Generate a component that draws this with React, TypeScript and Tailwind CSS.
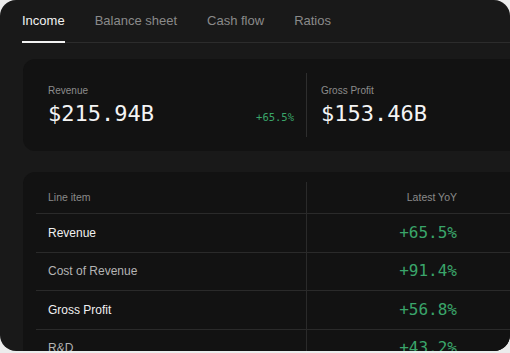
import React from 'react';

const tabs = ['Income', 'Balance sheet', 'Cash flow', 'Ratios'];

const rows = [
  { label: 'Revenue', value: '+65.5%', strong: true },
  { label: 'Cost of Revenue', value: '+91.4%', strong: false },
  { label: 'Gross Profit', value: '+56.8%', strong: true },
  { label: 'R&D', value: '+43.2%', strong: false },
];

const sans = { fontFamily: '"Liberation Sans", Arial, sans-serif' };
const mono = { fontFamily: '"DejaVu Sans Mono", "Liberation Mono", monospace' };

export default function App() {
  return (
    <div className="w-[510px] h-[353px] bg-[#ececec]" style={sans}>
      <div className="w-[510px] h-[351px] rounded-[16px] bg-[#191919] overflow-hidden">
        {/* Tabs */}
        <div className="ml-[22px] flex gap-[30px] border-b border-[#2c2c2c]">
          {tabs.map((t, i) => (
            <div
              key={t}
              className={`pt-[12px] pb-[12px] -mb-px text-[13px] leading-[17px] border-b-2 ${
                i === 0 ? 'text-[#f2f2f2] border-[#f2f2f2]' : 'text-[#8a8a8a] border-transparent'
              }`}
            >
              {t}
            </div>
          ))}
        </div>

        {/* Stat card */}
        <div className="ml-[23px] mt-[16px] w-[540px] h-[92px] rounded-[12px] bg-[#121212] flex py-[14px]">
          <div className="w-[284px] pl-[25px] pr-[12px] border-r border-[#2e2e2e] flex items-end justify-between pb-[10px]">
            <div className="flex flex-col gap-[4px]">
              <span className="text-[10px] leading-[13px] text-[#8c8c8c]">Revenue</span>
              <span className="text-[22px] leading-[26px] text-[#f4f4f4]" style={mono}>$215.94B</span>
            </div>
            <span className="text-[10.5px] leading-[14px] mb-[3px] text-[#3aa56a]" style={mono}>+65.5%</span>
          </div>
          <div className="pl-[14px] flex items-end pb-[10px]">
            <div className="flex flex-col gap-[4px]">
              <span className="text-[10px] leading-[13px] text-[#8c8c8c]">Gross Profit</span>
              <span className="text-[22px] leading-[26px] text-[#f4f4f4]" style={mono}>$153.46B</span>
            </div>
          </div>
        </div>

        {/* Table card */}
        <div className="ml-[23px] mt-[21px] w-[540px] h-[220px] rounded-[12px] bg-[#121212] pl-[13px] pt-[10px]">
          <div className="flex h-[32px] border-b border-[#2a2a2a]">
            <div className="w-[271px] pl-[12px] flex items-center border-r border-[#2a2a2a] text-[10.5px] text-[#8a8a8a]">
              Line item
            </div>
            <div className="w-[162px] pr-[12px] flex items-center justify-end text-[10.5px] text-[#8a8a8a]">
              Latest YoY
            </div>
          </div>
          {rows.map((r) => (
            <div key={r.label} className="flex h-[38.5px] border-b border-[#2a2a2a]">
              <div
                className={`w-[271px] pl-[12px] flex items-center border-r border-[#2a2a2a] text-[12px] ${
                  r.strong ? 'text-[#f0f0f0]' : 'text-[#b4b4b4]'
                }`}
              >
                {r.label}
              </div>
              <div className="w-[162px] pr-[12px] flex items-center justify-end text-[16px] text-[#3aa56a]" style={mono}>
                {r.value}
              </div>
            </div>
          ))}
        </div>
      </div>
    </div>
  );
}
